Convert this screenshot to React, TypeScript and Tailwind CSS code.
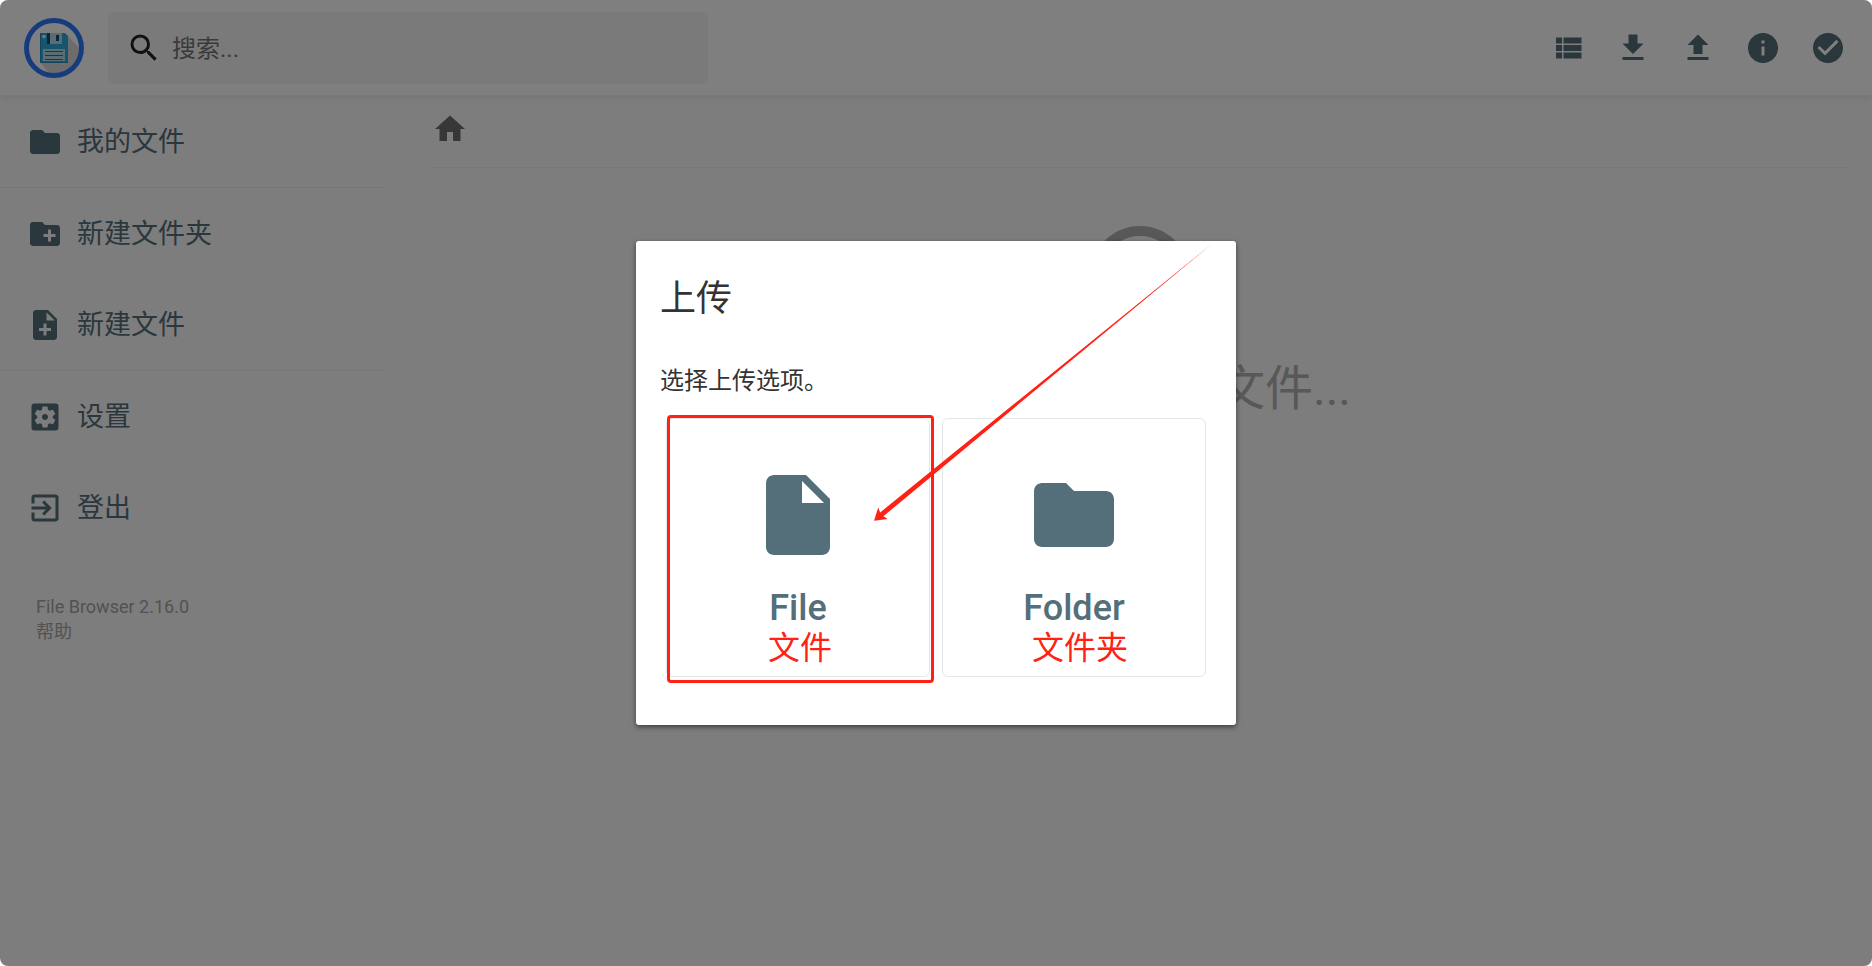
import type { ComponentType, ReactNode } from "react";
import {
  MdCheckCircle,
  MdCreateNewFolder,
  MdExitToApp,
  MdFileDownload,
  MdFileUpload,
  MdFolder,
  MdHome,
  MdInfo,
  MdInsertDriveFile,
  MdNoteAdd,
  MdSearch,
  MdSentimentDissatisfied,
  MdSettingsApplications,
} from "react-icons/md";

type IconType = ComponentType<{ className?: string }>;

type ItemType = {
  label: string;
  icon: IconType;
};

function ViewListIcon({ className }: { className?: string }) {
  return (
    <svg viewBox="0 0 24 24" fill="currentColor" className={className} aria-hidden="true">
      <path d="M4 14h4v-4H4v4zm0 5h4v-4H4v4zM4 9h4V5H4v4zm5 5h12v-4H9v4zm0 5h12v-4H9v4zM9 5v4h12V5H9z" />
    </svg>
  );
}

const sections: ItemType[][] = [
  [{ label: "我的文件", icon: MdFolder }],
  [
    { label: "新建文件夹", icon: MdCreateNewFolder },
    { label: "新建文件", icon: MdNoteAdd },
  ],
  [
    { label: "设置", icon: MdSettingsApplications },
    { label: "登出", icon: MdExitToApp },
  ],
];

const actions: ItemType[] = [
  { label: "切换显示方式", icon: ViewListIcon },
  { label: "下载", icon: MdFileDownload },
  { label: "上传", icon: MdFileUpload },
  { label: "信息", icon: MdInfo },
  { label: "选择多个", icon: MdCheckCircle },
];

function Logo() {
  return (
    <svg viewBox="0 0 60 60" className="size-15 shrink-0" aria-hidden="true">
      <circle cx="30" cy="30" r="27.5" fill="#fff" />
      <path d="M43 17 L58 33 L54 44 L44 54 L32 57 L24 54 L16 44 Z" fill="#d9d9d9" />
      <path d="M16 15h25l3 3v27H16z" fill="#2ea8db" />
      <path d="M16 15h1v30h-1zM16 44h28v1H16z" fill="#1f8dbd" />
      <path d="M23 15h3v11h-3z" fill="#0e4f78" />
      <path d="M26 15h12v11H26z" fill="#b9d9e6" />
      <path d="M32 17h3v6h-3z" fill="#0b4f78" />
      <circle cx="20" cy="18.5" r="1.8" fill="#e6f6fd" />
      <path d="M19 31h22v12H19z" fill="#b9d9e6" />
      <path d="M21 33h18v1H21zM21 37h18v1H21zM21 41h18v1H21z" fill="#2e7396" />
      <circle cx="30" cy="30" r="27.5" fill="none" stroke="#2c79fd" strokeWidth="5" />
    </svg>
  );
}

function Header() {
  return (
    <header className="relative z-10 flex h-24 items-center border-b border-black/5 bg-white px-6 shadow-[0_0_8px_rgba(0,0,0,0.12)]">
      <Logo />
      <label className="ml-6 flex h-18 w-[600px] items-center gap-[10px] rounded-lg bg-[#f5f5f5] px-[18px] text-[#222]">
        <MdSearch className="size-9" />
        <input
          type="text"
          aria-label="搜索"
          placeholder="搜索..."
          className="min-w-0 flex-1 bg-transparent pt-0.5 text-2xl outline-0 placeholder:text-[#757575]"
        />
      </label>
      <div className="mr-0.5 ml-auto flex gap-[29px]">
        {actions.map(({ label, icon: Icon }) => (
          <button key={label} type="button" aria-label={label} className="text-[#546e7a]">
            <Icon className="size-9" />
          </button>
        ))}
      </div>
    </header>
  );
}

function Sidebar() {
  return (
    <nav className="w-96 shrink-0">
      {sections.map((items, i) => (
        <div key={i} className={i > 0 ? "border-t border-black/5" : ""}>
          {items.map(({ label, icon: Icon }) => (
            <button
              key={label}
              type="button"
              className="flex h-[91px] w-full items-center gap-[14px] px-[27px] text-[27px] text-[#546e7a]"
            >
              <Icon className="size-9" />
              <span className="pt-0.5">{label}</span>
            </button>
          ))}
        </div>
      ))}
      <p className="mt-[41px] flex flex-col items-start px-9 text-lg leading-[25px] text-[#a5a5a5]">
        <span>File Browser 2.16.0</span>
        <a href="#help">帮助</a>
      </p>
    </nav>
  );
}

function Files() {
  return (
    <main className="mr-6 ml-12 min-w-0 flex-1">
      <div className="flex h-18 items-center border-b border-black/5 pb-1.5">
        <a href="#home" aria-label="主页" className="text-[#6f6f6f]">
          <MdHome className="size-9" />
        </a>
      </div>
      <h2 className="mt-12 flex flex-col items-center text-5xl text-[#b0b0b0]">
        <MdSentimentDissatisfied className="size-[120px]" />
        <span className="mt-6 leading-[58px]">这里没有任何文件...</span>
      </h2>
    </main>
  );
}

type CardProps = {
  label: string;
  icon: IconType;
  children?: ReactNode;
};

function UploadCard({ label, icon: Icon, children }: CardProps) {
  return (
    <div className="relative flex-1">
      <button
        type="button"
        className="flex h-[259px] w-full flex-col items-center rounded-md border border-[#e6e6e6] pt-12 text-[#546e7a]"
      >
        <Icon className="size-24" />
        <span className="mt-6 text-4xl leading-[42px] font-medium">{label}</span>
      </button>
      {children}
    </div>
  );
}

// tapered red arrow pointing at the file card
function Arrow() {
  return (
    <svg
      viewBox="0 0 340 280"
      className="pointer-events-none absolute top-0 right-[22px] h-[280px] w-[340px]"
      aria-hidden="true"
    >
      <path d="M339 2 L6.2 271.4 L4.2 266.6 L0 279.8 L13.6 278 L9.4 275.2 Z" fill="#ff2114" />
    </svg>
  );
}

function UploadDialog() {
  return (
    <div
      role="dialog"
      aria-labelledby="upload-title"
      className="relative w-[600px] rounded-[3px] bg-white px-6 pt-[34px] pb-12 text-[#333] shadow-[0_2px_5px_rgba(0,0,0,0.5)]"
    >
      <h2 id="upload-title" className="text-4xl leading-12">
        上传
      </h2>
      <p className="mt-10 text-2xl leading-9">选择上传选项。</p>
      <div className="mt-[19px] flex gap-3 px-[6px]">
        <UploadCard label="File" icon={MdInsertDriveFile}>
          <div className="pointer-events-none absolute top-[-3px] left-px h-[268px] w-[267px] rounded-sm border-3 border-[#ff2114]" />
          <p className="absolute bottom-2 left-[102px] text-[32px] leading-[42px] text-[#ff2114]">文件</p>
        </UploadCard>
        <UploadCard label="Folder" icon={MdFolder}>
          <p className="absolute bottom-2 left-[90px] text-[32px] leading-[42px] text-[#ff2114]">文件夹</p>
        </UploadCard>
      </div>
      <Arrow />
    </div>
  );
}

function App() {
  return (
    <div className="bg-white font-[Roboto,'Noto_Sans_CJK_SC',sans-serif]">
      <div className="relative min-h-screen overflow-hidden rounded-lg bg-[#fafafa]">
        <Header />
        <div className="flex">
          <Sidebar />
          <Files />
        </div>
        <div className="absolute inset-0 z-20 flex items-center justify-center bg-black/50">
          <UploadDialog />
        </div>
      </div>
    </div>
  );
}

export default App;
